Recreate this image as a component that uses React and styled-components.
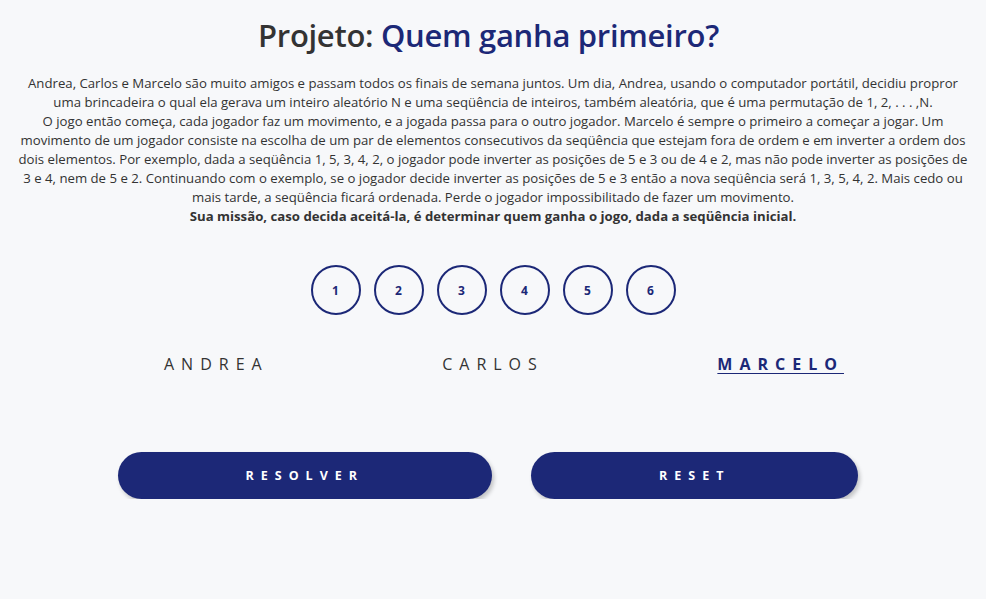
import React, {useState} from "react"
import styled, {createGlobalStyle} from "styled-components"

const Global = createGlobalStyle`
body {
  margin: 0;
  background: #f7f8fa;
  font-family: "Open Sans", "Noto Sans", sans-serif;
  color: #333;
}
`

const Main = styled.main`
display: flex;
flex-direction: column;
align-items: center;
padding-top: 14px;
`

const Title = styled.h1`
margin: 0 9px 0 0;
font-size: 31px;
font-weight: 600;
color: #333;
letter-spacing: -0.3px;
span { color: #1c2877; }
`

const Text = styled.p`
width: 954px;
margin: 18px 0 0;
font-size: 13.2px;
line-height: 19px;
letter-spacing: 0;
text-align: center;
color: #333;
b { font-weight: 700; }
`

const Seq = styled.div`
display: flex;
gap: 13px;
margin-top: 39px;
`

const Circle = styled.button`
width: 50px;
height: 50px;
border-radius: 50%;
border: 2px solid #1c2877;
background: transparent;
color: #1c2877;
font-family: inherit;
font-weight: 700;
font-size: 12px;
cursor: pointer;
`

const Players = styled.div`
display: flex;
justify-content: space-between;
width: 680px;
margin-top: 38px;
margin-left: 22px;
`

const Player = styled.span`
font-size: 16px;
letter-spacing: 7px;
color: ${p => p.active ? "#1c2877" : "#333"};
font-weight: ${p => p.active ? 700 : 400};
text-decoration: ${p => p.active ? "underline" : "none"};
text-underline-offset: 3px;
cursor: pointer;
`

const Actions = styled.div`
display: flex;
gap: 39px;
margin-top: 77px;
margin-left: -10px;
`

const Btn = styled.button`
height: 47px;
padding: 0 128px;
border: none;
border-radius: 24px;
background: #1c2877;
color: #fff;
font-family: inherit;
font-size: 12.5px;
font-weight: 700;
letter-spacing: 7px;
box-shadow: 2px 3px 4px rgba(0,0,0,0.22);
cursor: pointer;
`

const intro = "Andrea, Carlos e Marcelo são muito amigos e passam todos os finais de semana juntos. Um dia, Andrea, usando o computador portátil, decidiu propror uma brincadeira o qual ela gerava um inteiro aleatório N e uma seqüência de inteiros, também aleatória, que é uma permutação de 1, 2,\u00a0.\u00a0.\u00a0.\u00a0,N."

function App(){
  const [atual, setAtual] = useState(2)
  const nomes = ["ANDREA", "CARLOS", "MARCELO"]

  return(
    <Main>
      <Global />
      <Title>Projeto: <span>Quem ganha primeiro?</span></Title>
      <Text>
        {intro}
        <br/>
        O jogo então começa, cada jogador faz um movimento, e a jogada passa para o outro jogador. Marcelo é sempre o primeiro a começar a jogar. Um movimento de um jogador consiste na escolha de um par de elementos consecutivos da seqüência que estejam fora de ordem e em inverter a ordem dos dois elementos. Por exemplo, dada a seqüência 1, 5, 3, 4, 2, o jogador pode inverter as posições de 5 e 3 ou de 4 e 2, mas não pode inverter as posições de 3 e 4, nem de 5 e 2. Continuando com o exemplo, se o jogador decide inverter as posições de 5 e 3 então a nova seqüência será 1, 3, 5, 4, 2. Mais cedo ou mais tarde, a seqüência ficará ordenada. Perde o jogador impossibilitado de fazer um movimento.
        <br/>
        <b>Sua missão, caso decida aceitá-la, é determinar quem ganha o jogo, dada a seqüência inicial.</b>
      </Text>
      <Seq>
        {[1, 2, 3, 4, 5, 6].map(n => <Circle key={n}>{n}</Circle>)}
      </Seq>
      <Players>
        {nomes.map((n, i) => <Player key={n} active={i === atual} onClick={() => setAtual(i)}>{n}</Player>)}
      </Players>
      <Actions>
        <Btn>RESOLVER</Btn>
        <Btn>RESET</Btn>
      </Actions>
    </Main>
  )
}
export default App
